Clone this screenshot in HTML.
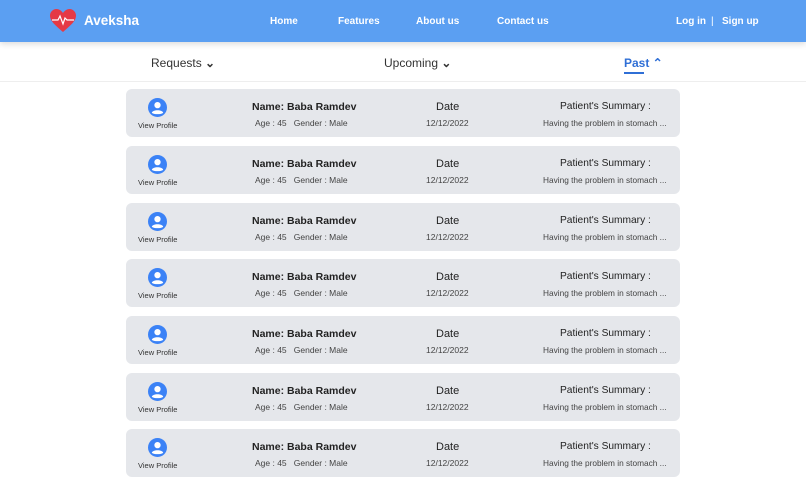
<!DOCTYPE html>
<html><head><style>
*{margin:0;padding:0;box-sizing:border-box}
body{width:806px;height:453px;overflow:hidden;background:#fff;font-family:"Liberation Sans",sans-serif;position:relative;color:#222}
.hdr{position:absolute;left:0;top:0;width:806px;height:42px;background:#5b9ff2;box-shadow:0 2px 6px rgba(0,0,0,.15)}
.hdr span{position:absolute;color:#fff;font-size:10px;top:16px;font-weight:bold}
.logo{position:absolute;left:84px;top:13px;color:#fff;font-weight:bold;font-size:13.5px}
.filt{position:absolute;top:56px;font-size:12px;color:#333}
.line{position:absolute;left:0;top:81px;width:806px;height:1px;background:#eee}
.card{position:absolute;left:126px;width:554px;height:48px;background:#e5e7eb;border-radius:6px}
.card .ic{position:absolute;left:22px;top:9px}
.card .vp{position:absolute;left:12px;top:32px;font-size:7.5px;color:#333}
.nm{position:absolute;left:126px;top:12px;font-size:10.5px;font-weight:bold;color:#222}
.ag{position:absolute;left:129px;top:29px;font-size:8.5px;color:#444}
.dt{position:absolute;left:310px;top:12px;font-size:11px;color:#222}
.dd{position:absolute;left:300px;top:29px;font-size:8.5px;color:#444}
.ps{position:absolute;left:434px;top:12px;font-size:10.2px;color:#222}
.pd{position:absolute;left:417px;top:29px;font-size:8.3px;color:#444}
</style></head><body>
<div class="hdr">
<svg style="position:absolute;left:50px;top:9px" width="26" height="24" viewBox="0 0 26 24"><path d="M13 23 C5 16 0 12 0 6.5 C0 3 3 0 6.5 0 C9.5 0 11.5 2 13 4 C14.5 2 16.5 0 19.5 0 C23 0 26 3 26 6.5 C26 12 21 16 13 23Z" fill="#e53945"/><path d="M2 11 H8 L10 7 L13 15 L15 9 L17 11 H24" stroke="#fff" stroke-width="1.2" fill="none"/></svg>
<div class="logo">Aveksha</div>
<span style="left:270px">Home</span><span style="left:338px">Features</span><span style="left:416px">About us</span><span style="left:497px">Contact us</span>
<span style="left:676px">Log in</span><span style="left:711px;font-weight:normal">|</span><span style="left:722px">Sign up</span>
</div>
<div class="filt" style="left:151px">Requests <b>&#8964;</b></div>
<div class="filt" style="left:384px">Upcoming <b>&#8964;</b></div>
<div class="filt" style="left:624px;color:#2f6fd6;font-weight:bold">Past &#8963;</div>
<div style="position:absolute;left:624px;top:72px;width:20px;height:2px;background:#2f6fd6"></div>
<div class="line"></div>
<div id="c"></div>
<script>
var tops=[89,146,203,259,316,373,429],h='';
tops.forEach(function(t){h+='<div class="card" style="top:'+t+'px"><svg class="ic" width="19" height="19" viewBox="0 0 20 20"><circle cx="10" cy="10" r="10" fill="#3b82f6"/><circle cx="10" cy="7.5" r="3.3" fill="#fff"/><path d="M4 15.5 C5 12 15 12 16 15.5 C14 17.5 6 17.5 4 15.5Z" fill="#fff"/></svg><div class="vp">View Profile</div><div class="nm">Name: Baba Ramdev</div><div class="ag">Age : 45 &nbsp; Gender : Male</div><div class="dt">Date</div><div class="dd">12/12/2022</div><div class="ps">Patient\'s Summary :</div><div class="pd">Having the problem in stomach ...</div></div>'});
document.getElementById('c').innerHTML=h;
</script>
</body></html>
